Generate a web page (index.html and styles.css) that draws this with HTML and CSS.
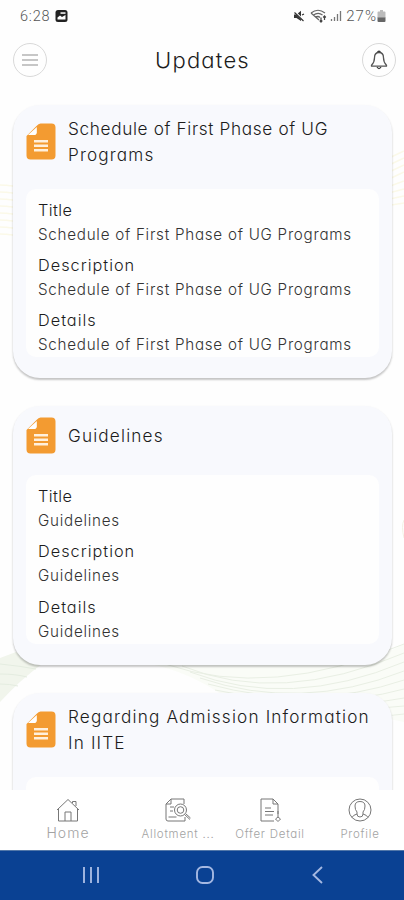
FILE: index.html
```html
<!DOCTYPE html>
<html lang="en">
<head>
<meta charset="utf-8">
<title>Updates</title>
<link rel="stylesheet" href="styles.css">
</head>
<body>
<svg class="defs" width="0" height="0" aria-hidden="true">
  <symbol id="doc" viewBox="0 0 30 37">
    <path fill="#f39b31" d="M14.500 .5h11a4 4 0 0 1 4 4V32.500a4 4 0 0 1-4 4H4.500a4 4 0 0 1-4-4V13L10.500 3q2-2.500 4-2.500z"/>
    <path fill="#fff" d="M2 12 10.800 4v5.200a2.800 2.800 0 0 1-2.800 2.800z"/>
    <path stroke="#fff0dc" stroke-width="2.500" d="M8 18.300h14M8 22.800h14M8 27.300h14"/>
  </symbol>
</svg>
<div class="phone">
  <div class="status">
    <span class="clock">6:28</span>
    <svg class="gallery" width="13" height="12" viewBox="0 0 13 12"><rect x=".5" width="12" height="12" rx="2.500" fill="#222"/><path d="M5.500 2.300h5v1.500h-5z" fill="#fff"/><path d="M2.500 9.500V7.500L5 5.500l2 1.500 3.500-2v4.500z" fill="#fff"/></svg>
    <span class="grow"></span>
    <svg width="12" height="12" viewBox="0 0 12 12"><path d="M1 4.500h2.500L8 .8V11L3.500 8H1z" fill="#333"/><path d="m1 1 10 10" stroke="#fff" stroke-width="2"/><path d="m1.500 2.500 9 8.500M9 5l2-1" stroke="#333" stroke-width="1.200"/></svg>
    <svg class="wifi" width="17" height="14" viewBox="0 0 17 14" fill="none" stroke="#666" stroke-width="1.200"><path d="M1 4Q8 -1.500 15 4M3.200 6.300Q8 2.500 12.500 6M5.500 8.500Q8 6.500 10 8.500M1 4l8 7"/><path d="M11 8.500V13M9.700 11.500 11 13l1.300-1.500M14.500 11V7M13.200 8.500 14.500 7l1.300 1.500" stroke="#444"/></svg>
    <svg class="signal" width="12" height="12" viewBox="0 0 12 12" stroke="#777" stroke-width="1.300"><path d="M1.500 9v2M4.500 7v4"/><path d="M7.500 4v7M10.500 1v10"/></svg>
    <span class="percent">27%</span>
    <svg class="battery" width="9" height="12" viewBox="0 0 9 12"><path d="M3 0h3v1.500h1.500a1 1 0 0 1 1 1V8h-8V2.500a1 1 0 0 1 1-1H3z" fill="#bbb"/><path d="M.5 7.500h8V11a1 1 0 0 1-1 1h-6a1 1 0 0 1-1-1z" fill="#666"/></svg>
  </div>
  <header class="bar">
    <span class="round"><svg width="18" height="14" viewBox="0 0 18 14" stroke="#8d8d8d" stroke-width="1.200"><path d="M1 2h16M1 7h16M1 12h16"/></svg></span>
    <h1>Updates</h1>
    <span class="round"><svg width="18" height="20" viewBox="0 0 18 20" fill="none" stroke="#555" stroke-width="1.300" stroke-linejoin="round"><path d="M9 2.500c-3 0-4.500 2.300-4.500 5.200 0 4-.8 5.300-3 7.500v1h15v-1c-2.200-2.200-3-3.500-3-7.500 0-2.900-1.500-5.200-4.500-5.200z"/><path d="M7.800 2.300a1.200 1.200 0 0 1 2.400 0M7 17q2 3 4 0" stroke="#333"/></svg></span>
  </header>
  <main class="feed">
    <svg class="waves" width="404" height="700" viewBox="0 90 404 700" fill="none">
      <g stroke="#fbf9e8" stroke-width="1.500"><path d="M0 185q12 0 26 4M0 192q12 0 26 4M0 199q12 0 26 4M0 206q12 0 26 4M0 213q12 0 26 4M0 220q12 0 26 4M0 227q12 0 26 4M0 234q12 0 26 4M385 160l19-9M385 167l19-9M385 174l19-9M385 181l19-9M385 188l19-7M385 194l19-5M385 200l19-4M385 206l19-3"/></g>
      <path d="M0 658 16 652 42 664Q20 680 0 702z" fill="#f1f5ec"/>
      <path d="M150 664 392 650 404 644V722Q300 700 225 697Q190 672 150 664z" fill="#fafcf7"/>
      <path d="M0 664q20 2 36 5M0 674q16 0 27 3M0 684q10 0 18 2" stroke="#e4ece0"/>
      <path d="M165 664Q270 700 404 644M182 666Q280 706 404 653M190 672Q290 710 404 662M200 678Q300 712 404 671M208 684Q310 712 404 680M215 690Q320 712 404 689M225 695Q330 712 404 698M300 706Q350 712 404 706M340 712Q380 718 404 714" stroke="#e9efe4"/>
      <path d="M404 520q-3 6 0 18" stroke="#f4f0e4"/>
    </svg>
    <article class="card">
      <div class="head"><svg class="doc"><use href="#doc"/></svg><h2><span class="snug">Schedule of First Phase of UG</span><br>Programs</h2></div>
      <dl>
        <dt class="short">Title</dt><dd>Schedule of First Phase of UG Programs</dd>
        <dt>Description</dt><dd>Schedule of First Phase of UG Programs</dd>
        <dt>Details</dt><dd>Schedule of First Phase of UG Programs</dd>
      </dl>
    </article>
    <article class="card">
      <div class="head"><svg class="doc"><use href="#doc"/></svg><h2>Guidelines</h2></div>
      <dl>
        <dt class="short">Title</dt><dd>Guidelines</dd>
        <dt>Description</dt><dd>Guidelines</dd>
        <dt>Details</dt><dd>Guidelines</dd>
      </dl>
    </article>
    <article class="card">
      <div class="head"><svg class="doc"><use href="#doc"/></svg><h2>Regarding Admission Information<br>In IITE</h2></div>
      <dl class="blank"></dl>
    </article>
  </main>
  <nav class="tabs">
    <a class="home"><svg width="26" height="26" viewBox="0 0 26 26"><path d="M2 13 13 2.500 24 13M3.500 11.500V24h19V11.500M10 24v-9h6v9M17.500 6V4.500H21V9"/></svg><span>Home</span></a>
    <a class="allot"><svg width="26" height="26" viewBox="0 0 26 26"><path d="M6 3V2h13v5M6 3v4H1v15q0 2 2 2h17v-4M1 7l5-5M5 10h4M5 14h3M3.500 20h8"/><circle cx="15.500" cy="13" r="6"/><circle cx="15.500" cy="13" r="3.300"/><path d="m19.500 17.500 5.500 5M21 17l4.500 4"/></svg><span>Allotment ...</span></a>
    <a class="offer"><svg width="26" height="26" viewBox="0 0 26 26"><path d="M17 24H4V2h12l5 5v10M16 2v5h5M8 11h6M8 14.500h9M8 18h8M21 14v6"/><path d="m18.500 22 2.500 2.500 2.500-2.500L21 20z"/></svg><span>Offer Detail</span></a>
    <a class="profile"><svg width="26" height="26" viewBox="0 0 26 26"><circle cx="13" cy="13" r="11"/><path d="M5 20.500q1-2.500 5-3.500v-2Q8 13 8 9q0-4.500 5-4.500T18 9q0 4-2 6v2q4 1 5 3.500M10 17q0 3 3 3t3-3"/></svg><span>Profile</span></a>
  </nav>
  <div class="system">
    <svg width="20" height="20" viewBox="0 0 20 20"><path d="M3 2v16M10 2v16M17 2v16"/></svg>
    <svg width="20" height="20" viewBox="0 0 20 20"><rect x="2" y="2" width="16" height="16" rx="5.500"/></svg>
    <svg width="20" height="20" viewBox="0 0 20 20"><path d="m14 2-8.500 8 8.500 8"/></svg>
  </div>
</div>
</body>
</html>
```
FILE: styles.css
```css
* { box-sizing: border-box; }
body { margin: 0; background: #fff; color: #1c1c1c; font-family: Inter, "Open Sans", sans-serif; font-weight: 300; font-feature-settings: "cv11"; }
h1, h2, dl, dd { margin: 0; font-weight: 300; }
.defs { position: absolute; }
.phone { display: flex; flex-direction: column; width: 404px; height: 900px; overflow: hidden; background: #fefefe; }
.status { display: flex; align-items: center; height: 32px; padding: 0 18px 0 20px; color: #555; font-family: Roboto, sans-serif; font-size: 14.500px; }
.clock { letter-spacing: .8px; }
.gallery { margin-left: 5px; }
.grow { flex: 1; }
.wifi { margin-left: 5px; }
.signal { margin-left: 3px; }
.percent { margin-left: 4px; font-size: 15px; letter-spacing: 1px; }
.battery { margin-left: 0; }
.bar { display: flex; align-items: center; justify-content: space-between; height: 58px; padding: 0 8px 2px 13px; }
.bar h1 { margin-right: 4px; font-size: 22px; letter-spacing: 1.200px; }
.round { display: flex; align-items: center; justify-content: center; width: 34px; height: 34px; border: 1px solid #d9d9d9; border-radius: 50%; }
.feed { position: relative; flex: none; height: 700px; padding: 14.500px 12px 0 13px; overflow: hidden; }
.waves { position: absolute; left: 0; top: 0; }
.card { position: relative; margin-bottom: 27.800px; padding: 11.500px 13px 21px; border-radius: 27px; background: #f8f9fd; box-shadow: 0 2px 2px rgba(0, 0, 0, .2), 0 1px 3px rgba(0, 0, 0, .06); }
.head { display: flex; align-items: center; gap: 12px; min-height: 36px; margin-bottom: 21.500px; }
.doc { flex: none; width: 30px; height: 37px; margin: -.5px 0; }
.head h2 { font-size: 17.200px; line-height: 25.500px; letter-spacing: 1.150px; white-space: nowrap; }
.head .snug { letter-spacing: .65px; }
dl { padding: 9px 12px 1px; border-radius: 10px; background: #fefefe; }
.blank { height: 169px; }
dt { font-size: 16.300px; line-height: 24px; letter-spacing: 1px; }
dt.short { letter-spacing: .4px; }
dd { margin: 1px 0 7.400px; color: #333; font-size: 15.200px; line-height: 23px; letter-spacing: .74px; white-space: nowrap; }
dd:last-child { margin-bottom: 0; }
.tabs { display: flex; flex: none; height: 60px; padding: 7px 0 0 13px; background: #fff; }
.tabs a { display: flex; flex-direction: column; align-items: center; color: #a3a3a3; font-size: 11.500px; letter-spacing: .75px; white-space: nowrap; }
.tabs svg { fill: none; stroke: #777; stroke-width: 1; }
.tabs span { line-height: 22px; }
.home { width: 110px; }
.tabs .home { font-size: 14px; letter-spacing: 1px; }
.tabs .home span { line-height: 19px; }
.allot { width: 110px; }
.offer { width: 74px; }
.profile { width: 88px; margin-left: 9px; }
.system { display: flex; flex: none; align-items: center; justify-content: space-between; height: 50px; padding: 0 76px 2px 81px; border-top: 1px solid #5277a9; background: #0a4193; }
.system svg { fill: none; stroke: #a5b8e2; stroke-width: 1.900; }
```
